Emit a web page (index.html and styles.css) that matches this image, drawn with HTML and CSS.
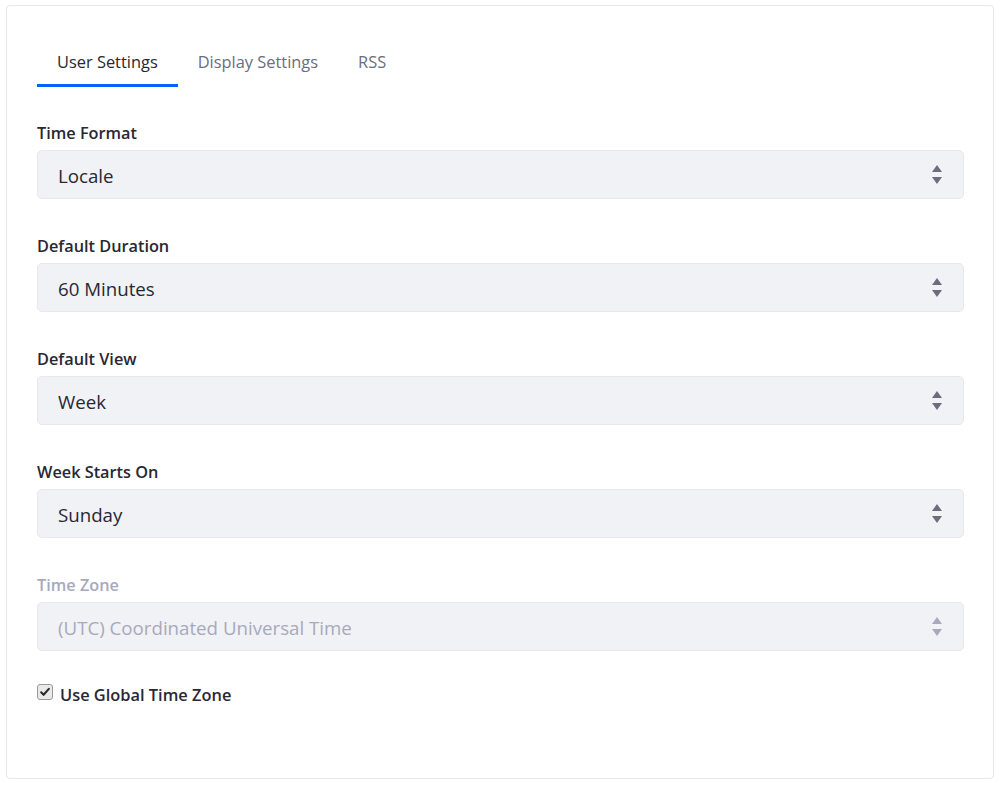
FILE: index.html
```html
<!DOCTYPE html>
<html lang="en">
<head>
<meta charset="utf-8">
<title>Calendar Settings</title>
<link rel="stylesheet" href="styles.css">
</head>
<body>
<div class="card">
  <ul class="tabs">
    <li class="tab active">User Settings</li>
    <li class="tab">Display Settings</li>
    <li class="tab">RSS</li>
  </ul>
  <form class="form">
    <div class="group">
      <label class="label">Time Format</label>
      <div class="select"><span>Locale</span><svg class="caret" viewBox="0 0 10 19" width="10" height="19"><polygon points="5,0 10,7 0,7"/><polygon points="0,12 10,12 5,19"/></svg></div>
    </div>
    <div class="group">
      <label class="label">Default Duration</label>
      <div class="select"><span>60 Minutes</span><svg class="caret" viewBox="0 0 10 19" width="10" height="19"><polygon points="5,0 10,7 0,7"/><polygon points="0,12 10,12 5,19"/></svg></div>
    </div>
    <div class="group">
      <label class="label">Default View</label>
      <div class="select"><span>Week</span><svg class="caret" viewBox="0 0 10 19" width="10" height="19"><polygon points="5,0 10,7 0,7"/><polygon points="0,12 10,12 5,19"/></svg></div>
    </div>
    <div class="group">
      <label class="label">Week Starts On</label>
      <div class="select"><span>Sunday</span><svg class="caret" viewBox="0 0 10 19" width="10" height="19"><polygon points="5,0 10,7 0,7"/><polygon points="0,12 10,12 5,19"/></svg></div>
    </div>
    <div class="group disabled">
      <label class="label">Time Zone</label>
      <div class="select"><span>(UTC) Coordinated Universal Time</span><svg class="caret" viewBox="0 0 10 19" width="10" height="19"><polygon points="5,0 10,7 0,7"/><polygon points="0,12 10,12 5,19"/></svg></div>
    </div>
    <div class="check-row">
      <span class="checkbox"><svg viewBox="0 0 16 16" width="16" height="16"><path d="M3.6 8.4 L6.4 11.2 L12.4 4.4" fill="none" stroke="#2b2b2b" stroke-width="2.4" stroke-linecap="round" stroke-linejoin="round"/></svg></span>
      <span class="check-label">Use Global Time Zone</span>
    </div>
  </form>
</div>
</body>
</html>
```
FILE: styles.css
```css
* { box-sizing: border-box; }
html, body { margin: 0; padding: 0; background: #fff; }
body {
  font-family: "Open Sans", "Noto Sans", sans-serif;
  color: #272833;
  padding: 5px 6px 0 6px;
}
.card {
  width: 988px;
  height: 774px;
  border: 1px solid #e7e7ed;
  border-radius: 4px;
  padding: 32px 29px 30px 30px;
}
.tabs {
  list-style: none;
  margin: 0;
  padding: 0;
  display: flex;
}
.tab {
  font-size: 16.4px;
  line-height: 24px;
  padding: 12px 20px 10px 20px;
  border-bottom: 3px solid transparent;
  color: #6b6c7e;
}
.tab.active {
  color: #272833;
  border-bottom-color: #0b5fff;
}
.form {
  margin: 34px 0 0 0;
  display: flex;
  flex-direction: column;
}
.group {
  display: flex;
  flex-direction: column;
  margin-bottom: 35px;
}
.label {
  font-size: 16.3px;
  line-height: 24px;
  font-weight: 600;
  margin-bottom: 5px;
  color: #272833;
}
.select {
  height: 49px;
  background: #f1f2f5;
  border: 1px solid #e7e7ed;
  border-radius: 5px;
  display: flex;
  align-items: center;
  justify-content: space-between;
  padding: 2px 21px 0 20px;
  font-size: 18.7px;
  color: #272833;
}
.caret { fill: #6b6c7e; display: block; margin-top: -2px; }
.disabled .label { color: #a7a9bc; }
.disabled .select { color: #a7a9bc; }
.disabled .caret { fill: #a7a9bc; }
.group.disabled { margin-bottom: 32px; }
.check-row {
  display: flex;
  align-items: flex-start;
  gap: 7px;
  font-size: 16.4px;
  line-height: 24px;
  font-weight: 600;
}
.checkbox {
  width: 16px;
  height: 16px;
  margin-top: 1px;
  border: 1px solid #9a9a9a;
  border-radius: 3px;
  background: #e9e9e9;
  display: flex;
  align-items: center;
  justify-content: center;
}
.checkbox svg { display: block; width: 14px; height: 14px; }
```
